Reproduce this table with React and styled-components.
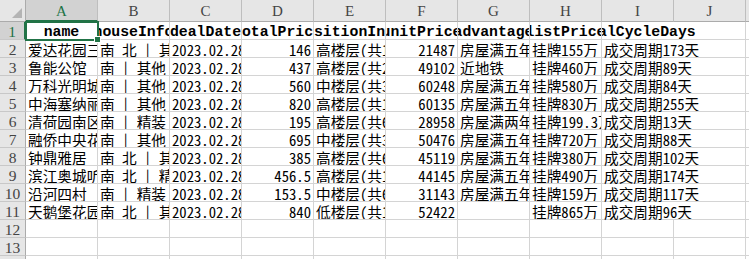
import React from 'react';
import styled, { createGlobalStyle } from 'styled-components';

const Global = createGlobalStyle`
  *, *::before, *::after { box-sizing: border-box; }
  html, body { margin: 0; padding: 0; background: #fff; overflow: hidden; }
`;

const GREEN = '#217346';
const GRID = '#d4d4d4';
const CELL_FONT = '"Noto Sans Mono CJK SC", "Noto Sans CJK SC", monospace';

const Sheet = styled.div`
  position: relative;
  display: grid;
  grid-template-columns: 26px repeat(11, 72px);
  grid-template-rows: 22px repeat(14, 18px);
  width: 749px;
  height: 259px;
  overflow: hidden;
  background: #fff;
`;

const Corner = styled.div`
  position: relative;
  background: #e6e6e6;
  border-right: 1px solid #ababab;
  border-bottom: 1px solid #ababab;
  &::after {
    content: '';
    position: absolute;
    right: 3px;
    bottom: 3px;
    border-left: 10px solid transparent;
    border-bottom: 10px solid #b4b4b4;
  }
`;

const ColHead = styled.div`
  display: flex;
  align-items: center;
  justify-content: center;
  padding-top: 2px;
  background: ${(p) => (p.$sel ? '#d2d2d2' : '#e6e6e6')};
  color: ${(p) => (p.$sel ? GREEN : '#444')};
  border-right: 1px solid #bebebe;
  border-bottom: ${(p) => (p.$sel ? `2px solid ${GREEN}` : '1px solid #ababab')};
  font: 15px "Liberation Serif", serif;
`;

const RowHead = styled.div`
  display: flex;
  align-items: center;
  justify-content: center;
  padding-top: 3px;
  background: ${(p) => (p.$sel ? '#d2d2d2' : '#e6e6e6')};
  color: ${(p) => (p.$sel ? GREEN : '#444')};
  border-right: ${(p) => (p.$sel ? `2px solid ${GREEN}` : '1px solid #ababab')};
  border-bottom: 1px solid #c8c8c8;
  font: 15.5px "Liberation Serif", serif;
`;

const Cell = styled.div`
  display: flex;
  align-items: center;
  justify-content: ${(p) => (p.$align === 'right' ? 'flex-end' : 'flex-start')};
  padding: 2px ${(p) => (p.$align === 'right' ? '2px' : '0')} 0 2px;
  border-right: ${(p) => (p.$open ? 'none' : `1px solid ${GRID}`)};
  border-bottom: 1px solid ${GRID};
  overflow: ${(p) => (p.$open ? 'visible' : 'hidden')};
  white-space: pre;
  color: #000;
  font-family: ${CELL_FONT};
  font-size: 14.67px;
  line-height: 16px;
`;

const HeadCell = styled.div`
  display: flex;
  align-items: center;
  justify-content: center;
  padding-top: 2px;
  border-right: ${(p) => (p.$open ? 'none' : `1px solid ${GRID}`)};
  border-bottom: 1px solid ${GRID};
  overflow: ${(p) => (p.$open ? 'visible' : 'hidden')};
  clip-path: ${(p) => (p.$open ? 'inset(0 -200px 0 0)' : 'none')};
  white-space: pre;
  color: #000;
  font: bold 14.8px "Liberation Mono", monospace;
`;

const Text = styled.span`
  flex: none;
`;

const Selection = styled.div`
  position: absolute;
  left: 25px;
  top: 21px;
  width: 74px;
  height: 20px;
  border: 2px solid ${GREEN};
  pointer-events: none;
  &::after {
    content: '';
    position: absolute;
    right: -4px;
    bottom: -4px;
    width: 7px;
    height: 7px;
    background: ${GREEN};
    border: 1px solid #fff;
  }
`;

const letters = ['A', 'B', 'C', 'D', 'E', 'F', 'G', 'H', 'I', 'J', 'K'];
const headers = ['name', 'houseInfo', 'dealDate', 'totalPrice', 'positionInfo', 'unitPrice', 'advantage', 'listPrice', 'dealCycleDays'];

const rows = [
  ['爱达花园三期', '南 北 | 其他 | 有电梯', '2023.02.28', '146', '高楼层(共18层)', '21487', '房屋满五年', '挂牌155万', '成交周期173天'],
  ['鲁能公馆', '南 | 其他 | 有电梯', '2023.02.28', '437', '高楼层(共26层)', '49102', '近地铁', '挂牌460万', '成交周期89天'],
  ['万科光明城市', '南 | 其他 | 有电梯', '2023.02.28', '560', '中楼层(共32层)', '60248', '房屋满五年', '挂牌580万', '成交周期84天'],
  ['中海塞纳丽州', '南 | 其他 | 有电梯', '2023.02.28', '820', '高楼层(共18层)', '60135', '房屋满五年', '挂牌830万', '成交周期255天'],
  ['清荷园南区', '南 | 精装 | 有电梯', '2023.02.28', '195', '高楼层(共6层)', '28958', '房屋满两年', '挂牌199.3万', '成交周期13天'],
  ['融侨中央花园', '南 | 其他 | 有电梯', '2023.02.28', '695', '中楼层(共33层)', '50476', '房屋满五年', '挂牌720万', '成交周期88天'],
  ['钟鼎雅居', '南 北 | 其他 | 无电梯', '2023.02.28', '385', '高楼层(共6层)', '45119', '房屋满五年', '挂牌380万', '成交周期102天'],
  ['滨江奥城听雨苑', '南 北 | 精装 | 有电梯', '2023.02.28', '456.5', '高楼层(共11层)', '44145', '房屋满五年', '挂牌490万', '成交周期174天'],
  ['沿河四村', '南 | 精装 | 无电梯', '2023.02.28', '153.5', '中楼层(共6层)', '31143', '房屋满五年', '挂牌159万', '成交周期117天'],
  ['天鹅堡花园', '南 北 | 其他 | 有电梯', '2023.02.28', '840', '低楼层(共18层)', '52422', '', '挂牌865万', '成交周期96天'],
];

const rightCols = new Set([3, 5]);

export default function App() {
  return (
    <>
      <Global />
      <Sheet>
        <Corner />
        {letters.map((l, i) => (
          <ColHead key={l} $sel={i === 0}>{l}</ColHead>
        ))}

        <RowHead $sel>1</RowHead>
        {letters.map((l, i) => (
          <HeadCell key={l} $open={i === 8}>
            <Text>{headers[i] || ''}</Text>
          </HeadCell>
        ))}

        {rows.map((r, ri) => (
          <React.Fragment key={ri}>
            <RowHead>{ri + 2}</RowHead>
            {letters.map((l, ci) => (
              <Cell key={l} $align={rightCols.has(ci) ? 'right' : 'left'} $open={ci === 8}>
                {r[ci] || ''}
              </Cell>
            ))}
          </React.Fragment>
        ))}

        {[12, 13, 14].map((n) => (
          <React.Fragment key={n}>
            <RowHead>{n}</RowHead>
            {letters.map((l) => (
              <Cell key={l} />
            ))}
          </React.Fragment>
        ))}
        <Selection />
      </Sheet>
    </>
  );
}
